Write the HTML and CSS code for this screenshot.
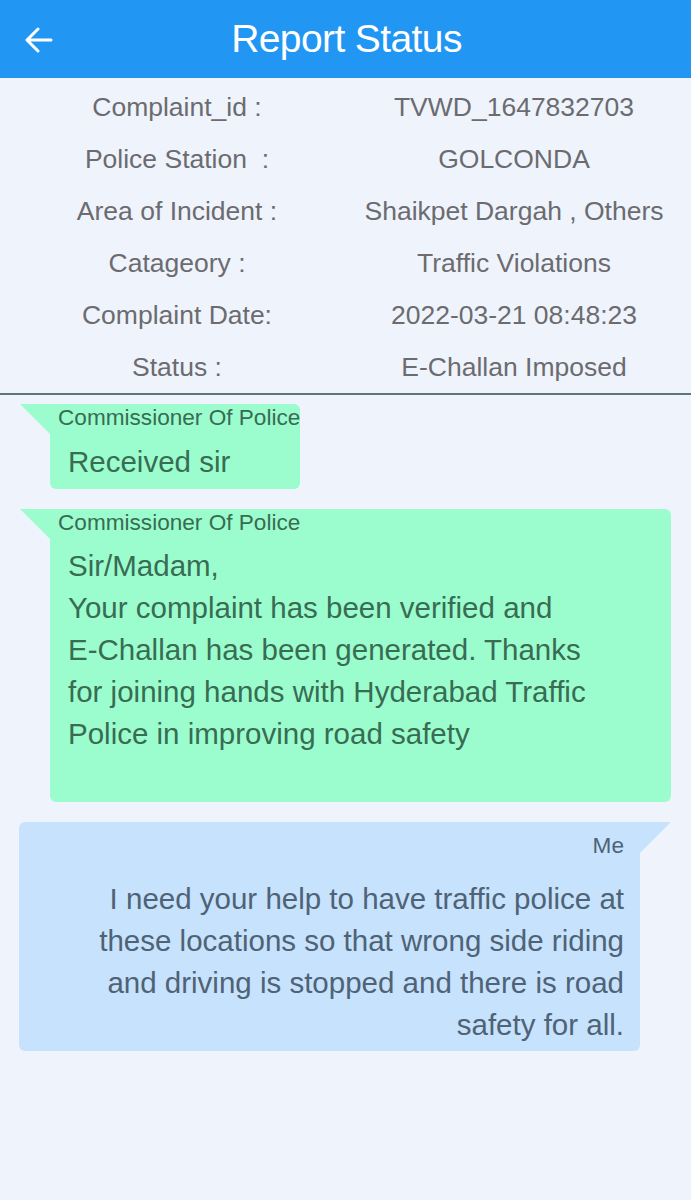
FILE: index.html
```
<!DOCTYPE html>
<html lang="en">
<head>
    <meta charset="UTF-8">
    <meta name="viewport" content="width=device-width, initial-scale=1.0">
    <title>Report Status</title>
    <link rel="stylesheet" href="styles.css">
</head>
<body>

    <header class="bar">
        <svg class="back" width="30" height="26" viewBox="0 0 30 26">
            <path d="M27 13H4M14 2L3 13l11 11" fill="none" stroke="#fff" stroke-width="3" stroke-linecap="round" stroke-linejoin="round"/>
        </svg>
        <h1>Report Status</h1>
    </header>

    <section class="info">
        <div class="label">Complaint_id :</div><div class="value">TVWD_1647832703</div>
        <div class="label">Police Station&nbsp; :</div><div class="value">GOLCONDA</div>
        <div class="label">Area of Incident :</div><div class="value">Shaikpet Dargah , Others</div>
        <div class="label">Catageory :</div><div class="value">Traffic Violations</div>
        <div class="label">Complaint Date:</div><div class="value">2022-03-21 08:48:23</div>
        <div class="label">Status :</div><div class="value">E-Challan Imposed</div>
    </section>

    <section class="chat">
        <div class="msg them">
            <div class="who">Commissioner Of Police</div>
            <div class="text">Received sir</div>
        </div>

        <div class="msg them wide">
            <div class="who">Commissioner Of Police</div>
            <div class="text">Sir/Madam,<br>Your complaint has been verified and E&#8209;Challan has been generated. Thanks for joining hands with Hyderabad Traffic Police in improving road safety</div>
        </div>

        <div class="msg me">
            <div class="who">Me</div>
            <div class="text">I need your help to have traffic police at these locations so that wrong side riding and driving is stopped and there is road safety for all.</div>
        </div>
    </section>

</body>
</html>
```

FILE: styles.css
```
body { margin: 0; background: #eff4fc; font-family: "Liberation Sans", Arial, sans-serif; }

.bar { height: 78px; background: #2196f3; display: flex; align-items: center; justify-content: center; position: relative; }
.bar h1 { margin: 0 0 0 2px; color: #fff; font-weight: normal; font-size: 39px; letter-spacing: -0.6px; }
.bar .back { position: absolute; left: 24px; top: 27px; }

.info { display: grid; grid-template-columns: 354px 1fr; grid-auto-rows: 52px; padding-top: 3px; border-bottom: 2px solid #5f757c; color: #6b6b70; font-size: 26.5px; }
.info div { display: flex; align-items: center; justify-content: center; }
.info .value { padding-right: 17px; }

.chat { display: flex; flex-direction: column; align-items: flex-start; gap: 20px; padding: 9px 0 40px; }
.msg { position: relative; border-radius: 6px; }
.msg::before { content: ""; position: absolute; top: 0; width: 31px; height: 31px; }
.msg .who { font-size: 22.6px; line-height: 28px; }
.msg .text { font-size: 29.5px; line-height: 42px; }

.them { background: #9bfdce; color: #386c53; margin-left: 50px; border-top-left-radius: 0; padding: 0 0 6px 8px; }
.them::before { left: -30px; background: #9bfdce; clip-path: polygon(0 0, 100% 0, 100% 100%); }
.them .text { padding-left: 10px; margin-top: 9px; }
.them.wide { margin-right: 20px; align-self: stretch; padding-bottom: 47px; }
.them.wide .text { padding-right: 62px; margin-top: 8px; }

.me { background: #c6e2fc; color: #4f6276; margin: 0 51px 0 19px; align-self: stretch; border-top-right-radius: 0; text-align: right; padding: 10px 16px 5px 46px; }
.me::before { right: -31px; background: #c6e2fc; clip-path: polygon(0 0, 100% 0, 0 100%); }
.me .text { margin-top: 18px; }
```
